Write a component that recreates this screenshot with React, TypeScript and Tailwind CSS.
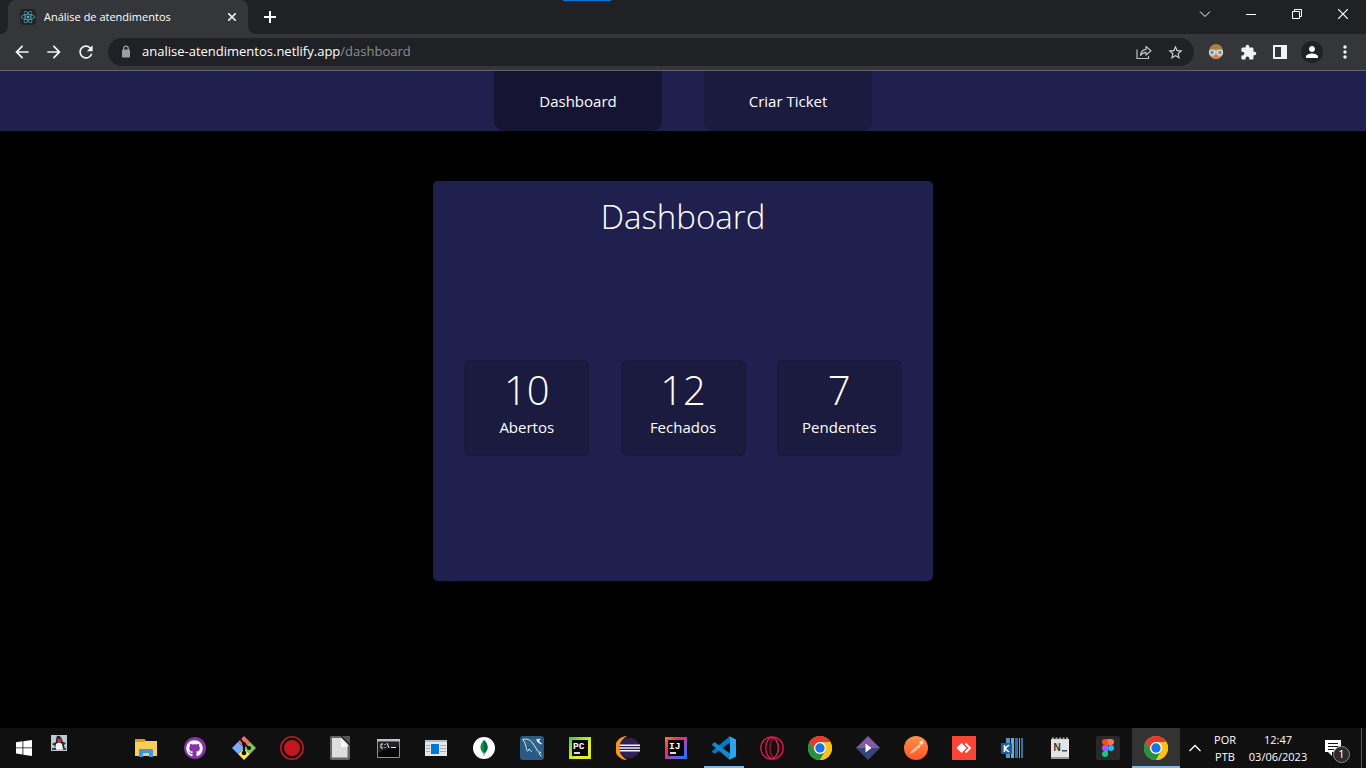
import type { ReactNode } from "react";
import {
  MdArrowBack,
  MdArrowForward,
  MdExtension,
  MdMoreVert,
  MdPerson,
  MdRefresh,
  MdStarBorder,
} from "react-icons/md";
import { FaReact, FaGithub } from "react-icons/fa";

function TabStrip() {
  return (
    <div className="relative flex h-[34px] items-stretch bg-[#202124] pl-2">
      <div className="absolute left-[563px] top-0 h-px w-12 bg-[#0078d7]" />
      <div className="relative flex w-60 items-center rounded-t-lg bg-[#35363a] pl-3 pr-2">
        <svg className="absolute -left-2 bottom-0" width="8" height="8" aria-hidden="true">
          <path d="M8 0v8H0a8 8 0 0 0 8-8z" fill="#35363a" />
        </svg>
        <svg className="absolute -right-2 bottom-0" width="8" height="8" aria-hidden="true">
          <path d="M0 0v8h8a8 8 0 0 1-8-8z" fill="#35363a" />
        </svg>
        <span className="flex size-4 items-center justify-center rounded-sm bg-[#222222] text-[#4fb8d4]">
          <FaReact size={14} />
        </span>
        <span className="ml-2 flex-1 whitespace-nowrap text-[11px] text-white">Análise de atendimentos</span>
        <button aria-label="Fechar guia" className="flex size-4 items-center justify-center text-[#e8eaed]">
          <svg width="8" height="8" stroke="currentColor" strokeWidth="1.6">
            <path d="M0 0l8 8M8 0L0 8" />
          </svg>
        </button>
      </div>
      <button aria-label="Nova guia" className="ml-4 flex w-3 items-center justify-center text-white">
        <svg width="12" height="12" stroke="currentColor" strokeWidth="2">
          <path d="M6 0v12M0 6h12" />
        </svg>
      </button>
      <div className="ml-auto flex h-7 text-white">
        <button aria-label="Pesquisar guias" className="flex w-[46px] items-center justify-center">
          <svg width="12" height="12" fill="none" stroke="currentColor">
            <path d="M1 3.5l5 5 5-5" />
          </svg>
        </button>
        <button aria-label="Minimizar" className="flex w-[46px] items-center justify-center">
          <svg width="10" height="10" fill="currentColor">
            <path d="M0 5h10v1H0z" />
          </svg>
        </button>
        <button aria-label="Restaurar" className="flex w-[46px] items-center justify-center">
          <svg width="10" height="10" fill="none" stroke="currentColor">
            <path d="M.5 2.5h7v7h-7zM2.5 2.5v-2h7v7h-2" />
          </svg>
        </button>
        <button aria-label="Fechar" className="flex w-[46px] items-center justify-center">
          <svg width="10" height="10" stroke="currentColor" strokeWidth="1.200">
            <path d="M0 0l10 10M10 0L0 10" />
          </svg>
        </button>
      </div>
    </div>
  );
}

function Toolbar() {
  return (
    <div className="flex h-[37px] items-center border-b border-[#626366] bg-[#35363a] pl-3 pr-[11px] text-[#f1f3f4]">
      <button aria-label="Voltar">
        <MdArrowBack size={20} />
      </button>
      <button aria-label="Avançar" className="ml-3">
        <MdArrowForward size={20} />
      </button>
      <button aria-label="Recarregar" className="ml-3">
        <MdRefresh size={20} />
      </button>
      <div className="relative ml-3 flex h-7 flex-1 items-center rounded-full bg-[#202124] px-[10px]">
        <svg width="16" height="14" viewBox="0 0 16 14" className="shrink-0 text-[#9aa0a6]" aria-hidden="true">
          <rect x="4" y="4.500" width="8" height="8" rx="1" fill="currentColor" />
          <path d="M5.700 5V3.500a2.300 2.300 0 0 1 4.600 0V5" fill="none" stroke="currentColor" strokeWidth="1.200" />
        </svg>
        <input
          aria-label="Endereço"
          readOnly
          value="analise-atendimentos.netlify.app/dashboard"
          className="absolute inset-y-0 left-[34px] w-80 bg-transparent text-[13px] text-transparent outline-none"
        />
        <span className="pointer-events-none ml-2 flex-1 text-[13px] text-white" aria-hidden="true">
          analise-atendimentos.netlify.app<span className="text-[#8b8e92]">/dashboard</span>
        </span>
        <button aria-label="Compartilhar" className="text-[#bdc1c6]">
          <svg width="16" height="16" fill="none" stroke="currentColor" strokeWidth="1.2">
            <path d="M1 5.500v9h11.500V12" />
            <path d="M4.500 11.500c.5-3.800 2.500-6 5.500-6.200V2.500l5 4.300-5 4.200V8.300c-2.600 0-4 1-5.500 3.200z" strokeLinejoin="round" />
          </svg>
        </button>
        <button aria-label="Favoritar" className="ml-[15px] text-[#d0d3d6]">
          <MdStarBorder size={17} />
        </button>
      </div>
      <button aria-label="Extensão" className="ml-[14px]">
        <svg width="16" height="16" viewBox="0 0 16 16">
          <circle cx="8" cy="8" r="7" fill="#dc9c76" />
          <path d="M1 7A7 7 0 0 1 15 7C12 4.500 5 4.500 1 7z" fill="#a58049" />
          <path d="M5 12q3-2 6 0l-1 2H6z" fill="#e07a52" />
          <g fill="#5f9fae" stroke="#dfeaed" strokeWidth="1.200">
            <circle cx="4" cy="8.500" r="2.500" />
            <circle cx="12" cy="8.500" r="2.500" />
          </g>
          <path d="M6.500 8h3" stroke="#dfeaed" />
        </svg>
      </button>
      <button aria-label="Extensões" className="ml-4">
        <MdExtension size={17} />
      </button>
      <button aria-label="Painel lateral" className="ml-4">
        <svg width="14" height="14">
          <path fill="currentColor" fillRule="evenodd" d="M0 0h14v14H0zM2 2v10h6V2z" />
        </svg>
      </button>
      <button aria-label="Perfil" className="ml-[14px] flex size-[22px] items-center justify-center rounded-full bg-[#202124] text-white">
        <MdPerson size={18} />
      </button>
      <button aria-label="Mais opções" className="ml-3">
        <MdMoreVert size={20} />
      </button>
    </div>
  );
}

const stats = [
  { value: 10, label: "Abertos" },
  { value: 12, label: "Fechados" },
  { value: 7, label: "Pendentes" },
];

function DashboardPage() {
  return (
    <div className="flex flex-1 flex-col bg-black text-[15px] text-white">
      <nav className="flex h-[60px] justify-center gap-[42px] bg-[#20204f]">
        <a href="#dashboard" className="flex w-[168px] items-center justify-center rounded-b-[10px] bg-[#151533]">
          Dashboard
        </a>
        <a href="#criar" className="flex w-[168px] items-center justify-center rounded-b-[10px] bg-[#1b1b3f]">
          Criar Ticket
        </a>
      </nav>
      <main className="flex flex-1 justify-center pt-[50px]">
        <section className="flex h-[400px] w-[500px] flex-col rounded-[5px] bg-[#20204f]">
          <h1 className="pt-2 text-center text-[33px] leading-[56px] font-light">Dashboard</h1>
          <div className="flex flex-1 items-center justify-evenly pb-[10px]">
            {stats.map((s) => (
              <div
                key={s.label}
                className="flex h-24 w-[125px] flex-col items-center rounded-md border border-[#181837] bg-[#1b1b3f] pt-1"
              >
                <span className="text-[40px] leading-[50px] font-light">{s.value}</span>
                <span className="leading-6">{s.label}</span>
              </div>
            ))}
          </div>
        </section>
      </main>
    </div>
  );
}

function ChromeIcon() {
  return (
    <svg width="24" height="24" viewBox="0 0 24 24">
      <circle cx="12" cy="12" r="12" fill="#fbc116" />
      <path d="M1.600 6A12 12 0 0 1 22.400 6H12L6.800 15z" fill="#e33b2e" />
      <path d="M1.600 6A12 12 0 0 0 12 24l5.200-9L6.800 15z" fill="#229342" />
      <path d="M22.400 6H12v6l5.200 3L12 24A12 12 0 0 0 22.400 6z" fill="#fbc116" />
      <circle cx="12" cy="12" r="6" fill="#fff" />
      <circle cx="12" cy="12" r="4.700" fill="#1a73e8" />
    </svg>
  );
}

function JetBrainsIcon({ id, text, colors }: { id: string; text: string; colors: string[] }) {
  return (
    <svg width="22" height="22" viewBox="0 0 22 22">
      <defs>
        <linearGradient id={id} x1="0" y1="0" x2="1" y2="1">
          {colors.map((c, i) => (
            <stop key={c} offset={i / (colors.length - 1)} stopColor={c} />
          ))}
        </linearGradient>
      </defs>
      <path d="M0 0h22v22H0z" fill={`url(#${id})`} />
      <path d="M3 3h16v16H3z" fill="#080508" />
      <text x="4" y="11.500" fontSize="9.500" fontWeight="700" fill="#fff" fontFamily="Liberation Mono, monospace">
        {text}
      </text>
      <path d="M5 15h6v2H5z" fill="#ddd" />
    </svg>
  );
}

const earlyApps: { name: string; icon: ReactNode }[] = [
  {
    name: "Explorador de Arquivos",
    icon: (
      <svg width="22" height="18" viewBox="0 0 22 18">
        <path d="M0 0h9l2 2h11v15H0z" fill="#f9cd57" />
        <path d="M0 0h9l1 1v2H0z" fill="#dd9b0f" />
        <path d="M4 18v-7q0-1 1-1h12q1 0 1 1v7h-4v-4H8v4z" fill="#3a96dd" />
      </svg>
    ),
  },
  {
    name: "GitHub",
    icon: (
      <span className="flex size-[22px] items-center justify-center rounded-full bg-[#8534a5] text-white">
        <FaGithub size={17} />
      </span>
    ),
  },
  {
    name: "Git",
    icon: (
      <svg width="24" height="24" viewBox="0 0 24 24">
        <path d="M12 0l6 6-6 6-6-6z" fill="#f26d6d" />
        <path d="M18 6l6 6-6 6-6-6z" fill="#80c558" />
        <path d="M12 12l6 6-6 6-6-6z" fill="#ffe165" />
        <path d="M6 6l6 6-6 6-6-6z" fill="#7caeff" />
        <path d="M8 2.500l4 5.500v9M12 8l5 4" stroke="#111" strokeWidth="2" fill="none" />
        <g fill="#111">
          <circle cx="12" cy="8" r="2" />
          <circle cx="17" cy="12" r="2" />
          <circle cx="12" cy="17" r="2.300" />
        </g>
      </svg>
    ),
  },
];

const apps: { name: string; icon: ReactNode; state?: "open" | "active" }[] = [
  {
    name: "Gravador",
    icon: (
      <svg width="24" height="24">
        <circle cx="12" cy="12" r="11.200" fill="none" stroke="#bd1920" strokeWidth="1.600" />
        <circle cx="12" cy="12" r="8" fill="#c4161f" />
      </svg>
    ),
  },
  {
    name: "LibreOffice",
    icon: (
      <svg width="20" height="24" viewBox="0 0 20 24">
        <path d="M1.500 0H12l8 8v14q0 2-2 2H2q-2 0-2-2V2Q0 0 1.500 0z" fill="#666" />
        <path d="M2 2h9l6.500 6.500V21.500H2z" fill="#dedede" />
        <path d="M11 2l6.500 6.500V11H11z" fill="#fff" />
        <path d="M12 0h8v8z" fill="#555" />
        <path d="M11 0l9 9" stroke="#111" />
      </svg>
    ),
  },
  {
    name: "Prompt de Comando",
    icon: (
      <svg width="23" height="19" viewBox="0 0 23 19">
        <path d="M.5.5h22v18H.5z" fill="#050505" stroke="#8b9298" />
        <path d="M0 0h23v2.500H0z" fill="#bcc5cc" />
        <path d="M1 3h21v5Q11 8 1 14z" fill="#222" />
        <path d="M6 5H4v4h2M8 5v1M8 8v1M10 4l2 5M14 8.500h5" stroke="#eee" fill="none" />
      </svg>
    ),
  },
  {
    name: "Aplicativo do Windows",
    icon: (
      <svg width="22" height="16" viewBox="0 0 22 16">
        <path d="M0 0h22v16H0z" fill="#e6e6e6" />
        <path d="M0 0h22v2H0z" fill="#b5bcc2" />
        <path d="M6 4h8v10H6z" fill="#0078d7" />
        <path d="M1 5.500h4M1 8.500h4M1 11.500h4M15 5.500h6M15 8.500h6M15 11.500h6" stroke="#a5acb1" />
      </svg>
    ),
  },
  {
    name: "MongoDB Compass",
    icon: (
      <svg width="22" height="22">
        <circle cx="11" cy="11" r="11" fill="#fff" />
        <path d="M11 3c5 5 4.500 10 0 14C6.500 13 6 8 11 3z" fill="#118d4d" />
        <path d="M11 3c5 5 4.500 10 0 14z" fill="#00683f" />
        <path d="M11 15v4" stroke="#75a58b" />
      </svg>
    ),
  },
  {
    name: "MySQL Workbench",
    icon: (
      <svg width="24" height="24">
        <rect width="24" height="24" rx="3" fill="#285a82" />
        <path d="M2 3h14l6 7v11L2 5z" fill="#356b92" opacity=".5" />
        <path
          d="M2.500 3.500c4-1 8 0 10 3.500 2 3 3 4 4.500 7 1 2 2 2 4 2.500l-2 1 2.500 3M3 4c2 2 2 4 3 6.500.5 2 .5 5 2 4.500l1-2c2 1 2 2 2.500 3"
          fill="none"
          stroke="#e0ebf1"
        />
        <path d="M17 3l1 2.500L21.500 8M18 5l2-2" fill="none" stroke="#fff" strokeWidth="1.500" />
      </svg>
    ),
  },
  { name: "PyCharm", icon: <JetBrainsIcon id="pycharm" text="PC" colors={["#21d745", "#8cea2e", "#f5ed20", "#d7ea26"]} /> },
  {
    name: "Eclipse",
    icon: (
      <svg width="24" height="24">
        <path d="M11 0A12 12 0 0 0 11 24Q3 19 3.500 12 3 5 11 0z" fill="#f7941e" />
        <circle cx="13.500" cy="12" r="10.300" fill="#2c2255" />
        <path d="M3.500 9.300h20.500M3 12h21M3.500 14.700h20.500" stroke="#f2f2f7" strokeWidth="1.600" />
      </svg>
    ),
  },
  { name: "IntelliJ IDEA", icon: <JetBrainsIcon id="intellij" text="IJ" colors={["#fc801d", "#fe2857", "#7458d9", "#087cfa"]} /> },
  {
    name: "Visual Studio Code",
    state: "open",
    icon: (
      <svg width="24" height="24" viewBox="0 0 24 24">
        <path d="M18 0v6.500L3.200 17.400q-.6.400-1.200 0L.4 16q-.6-.6 0-1.200z" fill="#007acc" />
        <path d="M18 24v-6.500L3.200 6.600q-.6-.4-1.200 0L.4 8q-.6.600 0 1.200z" fill="#1685cb" />
        <path d="M17 0l7 3.500v17L17 24q1-.5 1-2V2Q18 .5 17 0z" fill="#2aa4ec" />
      </svg>
    ),
  },
  {
    name: "Opera GX",
    icon: (
      <svg width="24" height="24" fill="none" stroke="#e3174c" strokeWidth="1.300">
        <circle cx="12" cy="12" r="11.200" />
        <ellipse cx="12" cy="12" rx="6.200" ry="10.500" />
        <path d="M15 1.500q-5 2-5 10.500t5 10.500M16 4.500q6 7.500 0 15" opacity=".7" />
      </svg>
    ),
  },
  { name: "Google Chrome", icon: <ChromeIcon /> },
  {
    name: "Reprodutor",
    icon: (
      <svg width="24" height="24">
        <path d="M12 0l12 12H0z" fill="#8558a7" />
        <path d="M0 12h24L12 24z" fill="#354579" />
        <path d="M9.500 7.500v9l6-4.500z" fill="#fff" />
      </svg>
    ),
  },
  {
    name: "Postman",
    icon: (
      <svg width="24" height="24">
        <defs>
          <linearGradient id="postman" x1="0" y1="0" x2="0" y2="1">
            <stop offset="0" stopColor="#ff9148" />
            <stop offset="1" stopColor="#ff5527" />
          </linearGradient>
        </defs>
        <circle cx="12" cy="12" r="12" fill="url(#postman)" />
        <path d="M5 19l3-4.500 6-5 1.800 1.800-6 4.700z" fill="#ffe2d3" />
        <path d="M14 9.500l2-1.500 1 1-1.500 2z" fill="#ffe2d3" />
        <circle cx="17.500" cy="6.500" r="2" fill="#ffe2d3" />
        <path d="M9 14.500l5-3M5 19l5-4" stroke="#ff6c37" strokeWidth=".7" />
      </svg>
    ),
  },
  {
    name: "AnyDesk",
    icon: (
      <svg width="24" height="24">
        <path d="M0 0h24v24H0z" fill="#f94436" />
        <path d="M9.500 7l5 5-5 5-5-5z" fill="#fff" />
        <path d="M13.500 7.500L18 12l-4.500 4.500" stroke="#fff" strokeWidth="2" fill="none" />
      </svg>
    ),
  },
  {
    name: "Kindle",
    icon: (
      <svg width="22" height="20" viewBox="0 0 22 20">
        <path d="M5 0h4v20H5z" fill="#4a9ad4" />
        <path d="M10 0h3v20h-3zM18 0h1v20h-1z" fill="#62b0e5" />
        <path d="M14 0h3v20h-3zM20 0h2v20h-2z" fill="#2774b3" />
        <rect y="5" width="11" height="11" rx="1" fill="#205d93" />
        <path d="M3.500 7v7M8 7l-4 3.500L8 14" stroke="#fff" strokeWidth="1.600" fill="none" />
      </svg>
    ),
  },
  {
    name: "Notas",
    icon: (
      <svg width="18" height="22" viewBox="0 0 18 22">
        <path d="M0 2h18v18.500H0z" fill="#e4e4e4" />
        <path d="M0 20h18v2H0z" fill="#999" />
        <path d="M1 1.500h16" stroke="#aaa" strokeWidth="2" strokeDasharray="2 1.500" />
        <text x="2.500" y="14" fontSize="10" fontWeight="700" fill="#333" fontFamily="Liberation Sans, sans-serif">
          N
        </text>
        <path d="M11 13h5v1.500h-5z" fill="#444" />
      </svg>
    ),
  },
  {
    name: "Figma",
    icon: (
      <svg width="24" height="24">
        <rect width="24" height="24" rx="2" fill="#292929" />
        <path d="M12 3H9a3 3 0 0 0 0 6h3z" fill="#f24e1e" />
        <path d="M12 3h3a3 3 0 0 1 0 6h-3z" fill="#ff7262" />
        <path d="M12 9H9a3 3 0 0 0 0 6h3z" fill="#a259ff" />
        <circle cx="15" cy="12" r="3" fill="#1abcfe" />
        <path d="M12 15H9a3 3 0 1 0 3 3z" fill="#0acf83" />
      </svg>
    ),
  },
  { name: "Google Chrome - Análise de atendimentos", state: "active", icon: <ChromeIcon /> },
];

function Taskbar() {
  return (
    <footer className="flex h-10 bg-[#101010] text-[11px] text-white">
      <button aria-label="Iniciar" className="flex w-12 items-center justify-center">
        <svg width="16" height="16" fill="#fff">
          <path d="M0 2.200L6.500 1.300V7.500H0zM7.300 1.200L16 0v7.500H7.300zM0 8.300h6.500v6.200L0 13.600zM7.300 8.300H16V16l-8.700-1.200z" />
        </svg>
      </button>
      <button aria-label="Java" className="flex w-[73px] items-start pl-[3px] pt-[7px]">
        <svg width="16" height="16">
          <path d="M0 0h16v16H0z" fill="#bccbd4" />
          <path d="M6 1c4-1 5 3 6 6l3 1-2 2 1 4H3l1-3-3-2 4-2c0-2 0-4 1-6z" fill="#262a2e" />
          <path d="M5 9q3-3 6 0l1 5H4z" fill="#f2f3f4" />
          <path d="M1 14h4M12 14h3" stroke="#444" strokeWidth="2" />
          <circle cx="8.500" cy="5.500" r="2" fill="#d92c28" />
        </svg>
      </button>
      {earlyApps.map((app) => (
        <button key={app.name} aria-label={app.name} className="flex w-[49px] items-center justify-center">
          {app.icon}
        </button>
      ))}
      {apps.map((app) => (
        <button
          key={app.name}
          aria-label={app.name}
          className={`relative flex w-12 items-center justify-center ${app.state === "active" ? "bg-[#333333]" : ""}`}
        >
          {app.icon}
          {app.state === "open" && <span className="absolute inset-x-1 bottom-0 h-0.5 bg-[#76b9ed]" />}
          {app.state === "active" && <span className="absolute inset-x-0 bottom-0 h-0.5 bg-[#76b9ed]" />}
        </button>
      ))}
      <div className="ml-auto flex items-stretch">
        <button aria-label="Mostrar ícones ocultos" className="flex w-6 items-center justify-center">
          <svg width="12" height="8" fill="none" stroke="#fff" strokeWidth="1.300">
            <path d="M.5 7L6 1.500 11.500 7" />
          </svg>
        </button>
        <button className="flex w-9 flex-col items-center justify-center leading-[17px]">
          <span>POR</span>
          <span>PTB</span>
        </button>
        <button className="flex w-[70px] flex-col items-center justify-center whitespace-nowrap leading-[17px]">
          <span>12:47</span>
          <span>03/06/2023</span>
        </button>
        <button aria-label="Notificações: 1" className="relative w-12">
          <svg className="absolute left-3 top-3" width="16" height="16">
            <path d="M0 0h16v12H7v4l-4-4H0z" fill="#fff" />
            <path d="M3 3.500h10M3 6.500h10M3 9.500h6" stroke="#101010" />
          </svg>
          <span className="absolute left-5 top-[18px] flex size-[17px] items-center justify-center rounded-full border border-[#8a8a8a] bg-[#2b2b2b]">
            1
          </span>
        </button>
        <span className="mr-1 w-px bg-[#555555]" />
      </div>
    </footer>
  );
}

export default function App() {
  return (
    <div className="flex min-h-screen flex-col bg-black font-['Open_Sans','Noto_Sans',sans-serif]">
      <TabStrip />
      <Toolbar />
      <DashboardPage />
      <Taskbar />
    </div>
  );
}
